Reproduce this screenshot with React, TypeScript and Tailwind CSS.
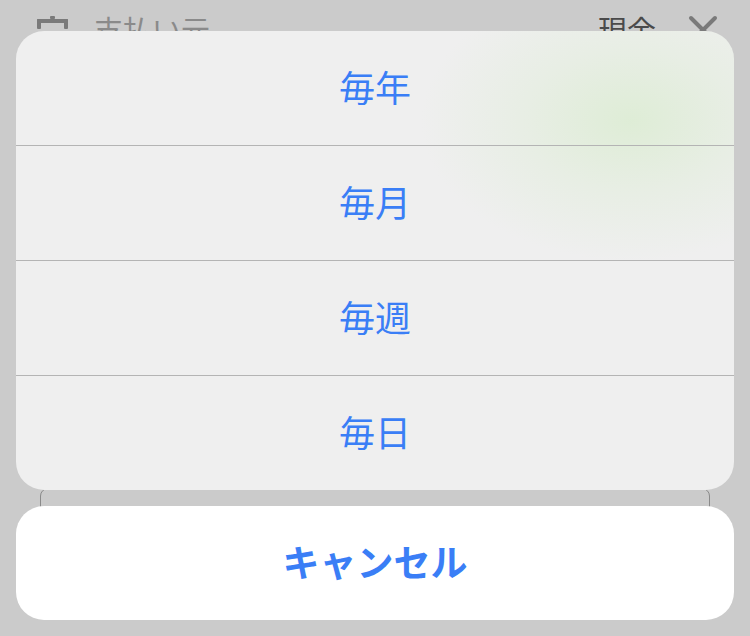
const options = ["毎年", "毎月", "毎週", "毎日"];

function TrayIcon() {
  return (
    <svg className="w-[31px] h-[28px]" viewBox="0 0 31 28" fill="#7a7a7a">
      <rect x="13" y="0" width="5" height="3" rx="1" />
      <rect x="0" y="3" width="31" height="4" rx="1" />
      <rect x="0" y="3" width="4" height="10" rx="1" />
      <rect x="27" y="3" width="4" height="10" rx="1" />
    </svg>
  );
}

function CloseIcon() {
  return (
    <svg className="w-[30px] h-[30px]" viewBox="0 0 30 30" fill="none" stroke="#7a7a7a" strokeWidth={4} strokeLinecap="round">
      <path d="M3 3l24 24M27 3L3 27" />
    </svg>
  );
}

export default function App() {
  return (
    <div
      className="relative w-[750px] h-[636px] overflow-hidden bg-[#cbcbcb]"
      style={{ fontFamily: '"Noto Sans CJK JP", "Noto Sans", sans-serif' }}
    >
      {/* page behind the sheet */}
      <div className="flex items-center h-[60px] pl-[37px] pr-[32px]">
        <TrayIcon />
        <span className="ml-[26px] text-[29px] text-[#8a8a8a]">支払い元</span>
        <span className="ml-auto text-[29px] text-[#4a4a4a]">現金</span>
        <div className="ml-[32px]">
          <CloseIcon />
        </div>
      </div>
      <div className="mt-[428px] mx-[40px] h-[70px] rounded-[8px] border-[1.5px] border-[#8a8a8a]" />

      {/* action sheet */}
      <div className="absolute inset-0 flex flex-col justify-end gap-4 px-4 pb-4">
        <div
          className="rounded-[28px] overflow-hidden bg-[#efefef]"
          style={{
            backgroundImage:
              "radial-gradient(ellipse 210px 140px at 615px 90px, rgba(218,236,208,0.8), rgba(218,236,208,0.35) 50%, rgba(218,236,208,0) 100%)",
          }}
        >
          {options.map((label, i) => (
            <div key={label}>
              {i > 0 && <div className="h-px bg-[#b4b4b4]" />}
              <button className="w-full h-[114px] pb-[5px] flex items-center justify-center text-[36px] text-[#3a7ef6]">
                {label}
              </button>
            </div>
          ))}
        </div>
        <button className="h-[114px] pb-[2px] rounded-[28px] bg-white flex items-center justify-center text-[37px] font-bold text-[#3a7ef6]">
          キャンセル
        </button>
      </div>
    </div>
  );
}
